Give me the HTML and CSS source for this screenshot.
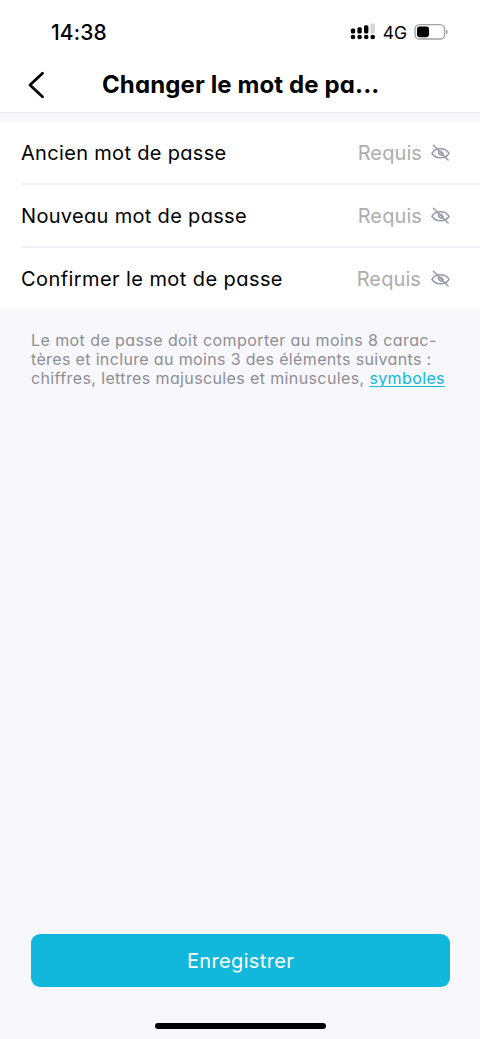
FILE: index.html
```html
<!DOCTYPE html>
<html lang="fr">
<head>
<meta charset="utf-8">
<title>Changer le mot de passe</title>
<link rel="stylesheet" href="styles.css">
</head>
<body>
<svg class="defs" width="0" height="0" aria-hidden="true">
  <symbol id="eye-off" viewBox="0 0 20 18">
    <path d="M1 9.3C4.8 3 15.2 3 19 9.3C15.2 15.6 4.8 15.6 1 9.3Z"/>
    <path d="M2.6 .9L18 16.4"/>
    <path d="M8 7.3C7.6 9.8 9.4 11.7 11.8 11.2M10.8 6.8C10.6 8.2 11.2 9 12.8 9.2"/>
  </symbol>
</svg>
<div class="screen">
  <div class="status">
    <span class="time">14:38</span>
    <div class="indicators">
      <svg class="signal" width="26" height="18" viewBox="0 0 26 18">
        <rect x=".8" y="5.6" width="4.4" height="4.8" rx="1.5"/>
        <rect x="7.4" y="4.2" width="4.4" height="6.2" rx="1.5"/>
        <rect x="14" y="2.2" width="4.4" height="8.2" rx="1.5"/>
        <rect class="faint" x="20.5" y=".6" width="4.4" height="9.8" rx="1.2"/>
        <circle cx="3" cy="14" r="2.3"/><circle cx="9.6" cy="14" r="2.3"/><circle cx="16.2" cy="14" r="2.3"/><circle cx="22.7" cy="14" r="2.3"/>
      </svg>
      <span class="network">4G</span>
      <svg class="battery" width="35" height="18" viewBox="0 0 35 18">
        <rect class="shell" x="1" y="1.6" width="29.6" height="14.4" rx="4.6"/>
        <rect x="3" y="3.6" width="12" height="10.6" rx="2.4"/>
        <path class="tip" d="M32.2 6.6C34.3 7.2 34.3 10.6 32.2 11.2Z"/>
      </svg>
    </div>
  </div>
  <header class="header">
    <svg class="back" width="18" height="28" viewBox="0 0 18 28"><path d="M15.5 2.2L3 14L15.5 25.8"/></svg>
    <h1 class="title">Changer le mot de pa...</h1>
  </header>
  <main class="fields">
    <div class="field"><span class="label">Ancien mot de passe</span><span class="hint">Requis</span><svg class="eye"><use href="#eye-off"/></svg></div>
    <div class="field"><span class="label">Nouveau mot de passe</span><span class="hint">Requis</span><svg class="eye"><use href="#eye-off"/></svg></div>
    <div class="field"><span class="label confirm">Confirmer le mot de passe</span><span class="hint">Requis</span><svg class="eye"><use href="#eye-off"/></svg></div>
  </main>
  <p class="note"><span class="line1">Le mot de passe doit comporter au moins 8 carac-</span><br><span class="line2">tères et inclure au moins 3 des éléments suivants :</span><br><span class="line3">chiffres, lettres majuscules et minuscules, <a class="link">symboles</a></span></p>
  <button class="save">Enregistrer</button>
  <div class="home"></div>
</div>
</body>
</html>
```
FILE: styles.css
```css
* { box-sizing: border-box; }
body { margin: 0; background: #f7f7fc; font-family: Inter, sans-serif; font-feature-settings: "cv11"; }
.defs { display: block; }
.screen { width: 480px; height: 1039px; display: flex; flex-direction: column; background: #f7f7fc; color: #000; }
.status { height: 58px; padding: 6px 31px 0 51px; display: flex; align-items: center; justify-content: space-between; background: #fff; }
.time { font-size: 21px; font-weight: 500; letter-spacing: .1px; }
.indicators { display: flex; align-items: center; }
.faint { fill: #d5d5d5; }
.network { margin: 0 7px; font-size: 17.5px; font-weight: 400; }
.shell { fill: none; stroke: #a2a2a2; stroke-width: 1.4; }
.tip { fill: #a2a2a2; }
.header { height: 55px; padding: 0 27px; display: flex; align-items: center; background: #fff; border-bottom: 1px solid #e9e9ec; }
.back { fill: none; stroke: #000; stroke-width: 2.8; stroke-linecap: round; stroke-linejoin: round; }
.title { margin: 0 0 0 57px; font-size: 24px; line-height: 30px; font-weight: 700; letter-spacing: .12px; white-space: nowrap; }
.fields { margin-top: 9px; padding-left: 21px; background: #fff; }
.field { height: 63px; padding-right: 30px; display: flex; align-items: center; font-size: 20px; }
.field:first-child { height: 61px; padding-top: 1px; }
.field + .field { border-top: 2px solid #f2f2f8; }
.label { flex: 1; white-space: nowrap; letter-spacing: .32px; }
.confirm { letter-spacing: .42px; }
.hint { color: #adadad; letter-spacing: .1px; }
.confirm + .hint { margin-right: 1px; }
.eye { width: 19px; height: 18px; margin-left: 9px; fill: none; stroke: #969aaa; stroke-width: 1.6; stroke-linecap: round; }
.note { margin: 22px 0 0 31px; font-size: 16px; line-height: 19px; color: #8e8e93; white-space: nowrap; }
.line1 { letter-spacing: .42px; }
.line2 { letter-spacing: .35px; }
.line3 { letter-spacing: .38px; }
.link { color: #12b8db; text-decoration: underline; text-underline-offset: 2px; text-decoration-thickness: 1px; }
.save { margin: auto 30px 0 31px; height: 53px; border: 0; border-radius: 9px; background: #12b8db; color: #fff; font: 400 20px Inter, sans-serif; font-feature-settings: "cv11"; letter-spacing: .35px; }
.home { width: 171px; height: 6px; margin: 36px 0 10px 155px; border-radius: 3px; background: #000; flex: none; }
```
